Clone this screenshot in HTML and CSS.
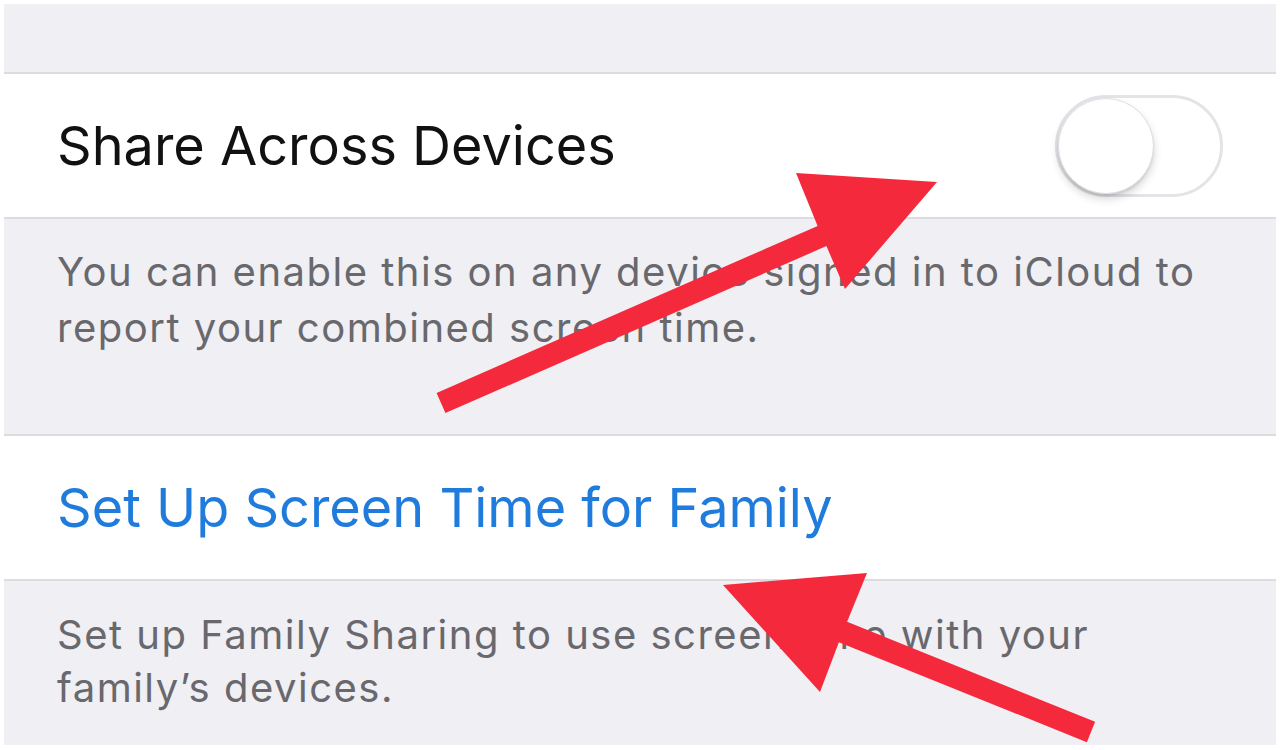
FILE: index.html
```html
<!DOCTYPE html>
<html lang="en">
<head>
<meta charset="utf-8">
<title>Screen Time</title>
<link rel="stylesheet" href="styles.css">
</head>
<body>
<div class="frame">
  <div class="spacer"></div>
  <div class="cell">
    <span class="label">Share Across Devices</span>
    <div class="toggle"><div class="knob"></div></div>
  </div>
  <div class="footer footer-one">
    <p>You can enable this on any device signed in to iCloud to<br>report your combined screen time.</p>
  </div>
  <div class="cell">
    <span class="label link">Set Up Screen Time for Family</span>
  </div>
  <div class="footer footer-two">
    <p>Set up Family Sharing to use screen time with your<br>family’s devices.</p>
  </div>
  <svg class="arrows" width="1280" height="750" viewBox="0 0 1280 750" xmlns="http://www.w3.org/2000/svg">
    <polygon points="436.6,392.9 817.6,225.9 796,173 937,182 845,289 826.4,246.1 445.4,413.1" fill="#f42a3c"/>
    <polygon points="1095.1,721.8 847.1,621.8 867,573 723,585 820,692 838.9,642.2 1086.9,742.2" fill="#f42a3c"/>
  </svg>
</div>
</body>
</html>
```
FILE: styles.css
```css
html, body {
  margin: 0;
  padding: 0;
  background: #ffffff;
}
body {
  width: 1280px;
  height: 750px;
  overflow: hidden;
  font-family: Inter, "Liberation Sans", sans-serif;
}
.frame {
  position: relative;
  margin: 4px 4px 0 4px;
  width: 1272px;
  height: 741px;
  background: #efeff4;
  display: flex;
  flex-direction: column;
}
.spacer {
  height: 68px;
  border-bottom: 2px solid #dcdce0;
  flex: none;
}
.cell {
  flex: none;
  height: 143px;
  background: #ffffff;
  border-bottom: 2px solid #dcdce0;
  display: flex;
  align-items: center;
  justify-content: space-between;
  padding: 0 53px;
}
.label {
  font-size: 54px;
  color: #111111;
  letter-spacing: 0;
}
.link {
  color: #1f7bdc;
}
.toggle {
  width: 162px;
  height: 96px;
  border: 3px solid #e4e4e8;
  border-radius: 51px;
  background: #ffffff;
  position: relative;
  box-sizing: content-box;
}
.knob {
  position: absolute;
  left: 0;
  top: 0;
  width: 94px;
  height: 94px;
  border-radius: 50%;
  background: #ffffff;
  border: 1px solid #dedee2;
  box-shadow: 0 5px 8px rgba(0, 0, 0, 0.16), 0 2px 2px rgba(0, 0, 0, 0.08);
}
.footer {
  flex: none;
  border-bottom: 2px solid #dcdce0;
  padding: 0 53px;
}
.footer p {
  margin: 0;
  font-size: 40px;
  line-height: 56px;
  letter-spacing: 1.5px;
  color: #68686d;
}
.footer-one {
  height: 190px;
  padding-top: 25px;
}
.footer-two {
  border-bottom: none;
  padding-top: 27px;
  flex: 1;
}
.footer-two p {
  line-height: 53px;
}
.arrows {
  position: absolute;
  left: -4px;
  top: -4px;
  pointer-events: none;
}
```
